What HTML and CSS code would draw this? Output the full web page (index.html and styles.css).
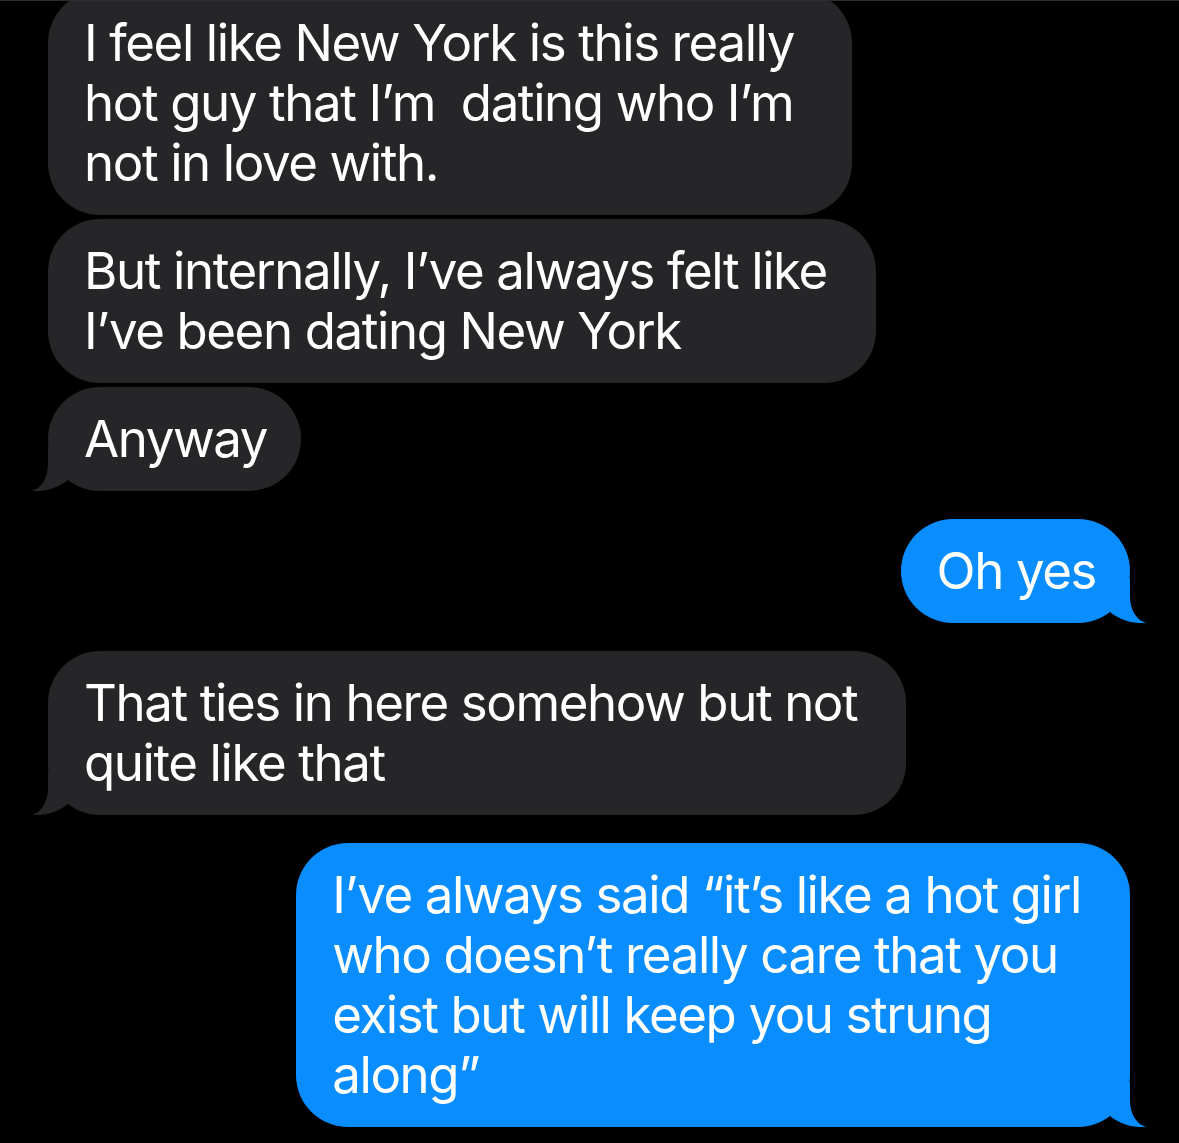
FILE: index.html
```html
<!DOCTYPE html>
<html lang="en">
<head>
<meta charset="utf-8">
<title>Messages</title>
<link rel="stylesheet" href="styles.css">
</head>
<body>
<div class="topline"></div>
<main class="thread">
  <div class="group them">
    <div class="msg gray first">I feel like New York is this really<br>hot guy that I’m&nbsp; dating who I’m<br>not in love with.</div>
    <div class="msg gray">But internally, I’ve always felt like<br>I’ve been dating New York</div>
    <div class="msg gray single">Anyway<svg class="tail left" viewBox="0 0 56 45" width="56" height="45"><path d="M16 0 V18 C16 33 9 42 0 45 C13 46 25 42 35 35 L52 0 Z"/></svg></div>
  </div>
  <div class="group me">
    <div class="msg blue single">Oh yes<svg class="tail right" viewBox="0 0 56 45" width="56" height="45"><path d="M16 0 V18 C16 33 9 42 0 45 C13 46 25 42 35 35 L52 0 Z"/></svg></div>
  </div>
  <div class="group them">
    <div class="msg gray multi">That ties in here somehow but not<br>quite like that<svg class="tail left" viewBox="0 0 56 45" width="56" height="45"><path d="M16 0 V18 C16 33 9 42 0 45 C13 46 25 42 35 35 L52 0 Z"/></svg></div>
  </div>
  <div class="group me">
    <div class="msg blue multi">I’ve always said “it’s like a hot girl<br>who doesn’t really care that you<br>exist but will keep you strung<br>along”<svg class="tail right" viewBox="0 0 56 45" width="56" height="45"><path d="M16 0 V18 C16 33 9 42 0 45 C13 46 25 42 35 35 L52 0 Z"/></svg></div>
  </div>
</main>
</body>
</html>
```
FILE: styles.css
```css
html, body {
  margin: 0;
  padding: 0;
  background: #000;
  overflow: hidden;
}
body {
  width: 1179px;
  height: 1143px;
  font-family: "Inter", "Noto Sans", sans-serif;
  color: #fff;
}
.topline {
  position: relative;
  z-index: 2;
  height: 1px;
  background: #2c2c2e;
}
.thread {
  display: flex;
  flex-direction: column;
  gap: 28px;
  padding: 0 49px 0 48px;
  margin-top: -10px;
}
.group {
  display: flex;
  flex-direction: column;
  gap: 4px;
}
.group.them { align-items: flex-start; }
.group.me { align-items: flex-end; }
.msg {
  position: relative;
  font-size: 51px;
  line-height: 60px;
  letter-spacing: -1.4px;
  padding: 22px 49px 22px 36px;
  border-radius: 52px;
  white-space: nowrap;
}
.msg.single { padding-right: 34px; }
.msg.first { padding-right: 58px; }
.gray { background: #262628; }
.blue { background: #0a8dff; }
.gray .tail path { fill: #262628; }
.blue .tail path { fill: #0a8dff; }
.tail {
  position: absolute;
  bottom: 0;
  display: block;
}
.tail.left { left: -16px; }
.tail.right { right: -16px; transform: scaleX(-1); }
```
